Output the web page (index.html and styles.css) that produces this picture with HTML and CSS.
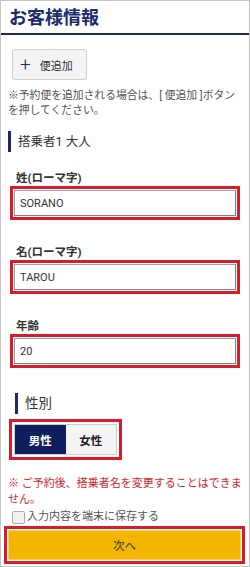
FILE: index.html
```html
<!DOCTYPE html>
<html lang="ja">
<head>
    <meta charset="UTF-8">
    <meta name="viewport" content="width=device-width, initial-scale=1.0">
    <title>お客様情報</title>
    <link rel="stylesheet" href="styles.css">
</head>
<body>
    <div class="page">
        <div class="page-header">
            <h1 class="page-title">お客様情報</h1>
        </div>

        <div class="content">
            <button class="add-flight" type="button"><span class="plus">+</span>便追加</button>
            <p class="note">※予約便を追加される場合は、[ 便追加 ]ボタンを押してください。</p>

            <h2 class="section-title">搭乗者1 大人</h2>

            <div class="field">
                <label class="field-label" for="last-name">姓(ローマ字)</label>
                <div class="highlight">
                    <input class="text-input" id="last-name" type="text" value="SORANO">
                </div>
            </div>

            <div class="field">
                <label class="field-label" for="first-name">名(ローマ字)</label>
                <div class="highlight">
                    <input class="text-input" id="first-name" type="text" value="TAROU">
                </div>
            </div>

            <div class="field">
                <label class="field-label" for="age">年齢</label>
                <div class="highlight">
                    <input class="text-input" id="age" type="text" value="20">
                </div>
            </div>

            <h2 class="section-title sub">性別</h2>
            <div class="highlight gender-box">
                <div class="segmented">
                    <span class="segment active">男性</span>
                    <span class="segment">女性</span>
                </div>
            </div>

            <p class="warning">※ ご予約後、搭乗者名を変更することはできません。</p>
            <label class="save-option"><span class="checkbox"></span>入力内容を端末に保存する</label>

            <div class="highlight next-box">
                <button class="next-button" type="button">次へ</button>
            </div>
        </div>
    </div>
</body>
</html>
```

FILE: styles.css
```css
body {
    margin: 0;
    font-family: Roboto, "Noto Sans CJK JP", sans-serif;
    color: #333;
    background-color: #fff;
}

.page {
    width: 250px;
    height: 567px;
    box-sizing: border-box;
    border: 1px solid #c6c6c6;
    overflow: hidden;
}

.page-header {
    height: 32px;
    padding: 0 8px;
    border-bottom: 2px solid #1f2a4c;
}

.page-title {
    margin: 0;
    font-size: 18px;
    line-height: 33px;
    font-weight: bold;
    color: #1b2a6a;
}

.content {
    padding: 0 3px 0 3px;
}

.add-flight {
    display: flex;
    align-items: center;
    height: 31px;
    margin: 14px 0 0 8px;
    padding: 0 13px 0 7px;
    font-family: inherit;
    font-size: 11px;
    color: #333;
    background-color: #f4f4f4;
    border: 1px solid #cfcfcf;
    border-radius: 3px;
}

.plus {
    font-size: 19px;
    font-weight: 300;
    color: #1b2a6a;
    margin-right: 9px;
    line-height: 1;
}

.note {
    margin: 8px 4px 0 4px;
    font-size: 10.8px;
    line-height: 15px;
    color: #555;
}

.section-title {
    margin: 13px 0 0 4px;
    padding-left: 7px;
    border-left: 3px solid #1b2a6a;
    font-size: 12.5px;
    font-weight: normal;
    line-height: 21px;
    color: #333;
}

.section-title.sub {
    margin: 25px 0 0 11px;
    padding-left: 7px;
    font-size: 13.5px;
}

.field {
    margin-top: 19px;
}

.field + .field {
    margin-top: 25px;
}

.field-label {
    display: block;
    margin-left: 12px;
    font-size: 11.5px;
    font-weight: bold;
    line-height: 14px;
    color: #333;
}

.highlight {
    margin: 1px 6px 0 6px;
    padding: 1px;
    border: 3px solid #d81d2a;
    background-color: #fff;
}

.text-input {
    display: block;
    width: 100%;
    height: 26px;
    box-sizing: border-box;
    padding: 0 5px;
    font-family: Roboto, "Noto Sans CJK JP", sans-serif;
    font-size: 11px;
    color: #333;
    border: 1px solid #9d9db8;
    border-right-color: #7b7b9a;
    border-bottom-color: #7b7b9a;
    background-color: #fff;
}

.gender-box {
    width: 103px;
    margin: 5px 0 0 5px;
    padding: 2px;
}

.segmented {
    display: flex;
    height: 31px;
    box-sizing: border-box;
    border: 1px solid #ccc;
}

.segment {
    flex: 1;
    display: flex;
    align-items: center;
    justify-content: center;
    font-size: 11.5px;
    font-weight: bold;
    color: #222;
    background-color: #f5f5f5;
}

.segment.active {
    color: #fff;
    background-color: #0f1f5e;
}

.warning {
    margin: 16px 4px 0 4px;
    font-size: 11px;
    line-height: 16px;
    color: #d81d2a;
}

.save-option {
    display: flex;
    align-items: center;
    margin: 1px 0 0 8px;
    font-size: 11px;
    line-height: 16px;
    color: #555;
}

.checkbox {
    width: 11px;
    height: 11px;
    margin-right: 2px;
    border: 1px solid #aaa;
    border-radius: 2px;
    background-color: #f2f2f2;
}

.next-box {
    margin: 1px 1px 0 0;
    padding: 1px;
}

.next-button {
    display: block;
    width: 100%;
    height: 30px;
    font-family: inherit;
    font-size: 11.5px;
    color: #333;
    background-color: #f3b600;
    border: 1px solid #f6d36a;
}
```
